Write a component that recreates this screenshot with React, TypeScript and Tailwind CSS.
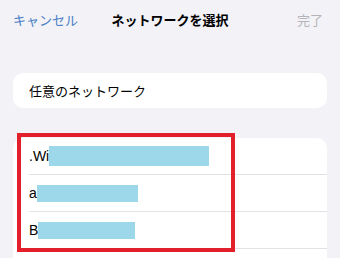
import React from 'react';

const rows = [
  { prefix: '.Wi', w: 160, h: 20 },
  { prefix: 'a', w: 101, h: 17 },
  { prefix: 'B', w: 97, h: 17 },
  { prefix: '', w: 0, h: 0 },
];

export default function App() {
  return (
    <div
      className="relative w-[340px] h-[258px] overflow-hidden bg-[#f2f2f7]"
      style={{ fontFamily: '"Noto Sans CJK JP", "Noto Sans", sans-serif' }}
    >
      <div className="grid grid-cols-[1fr_auto_1fr] items-center h-10 px-[13px] text-[13px]">
        <span className="text-[#4a7ec6]">キャンセル</span>
        <span className="font-bold text-black">ネットワークを選択</span>
        <span className="justify-self-end text-[#b4b4b9] pr-[4px]">完了</span>
      </div>

      <div className="mx-[13px] mt-[33px] h-[35px] rounded-[10px] bg-white px-4 flex items-center text-[13px] text-black">
        任意のネットワーク
      </div>

      <div className="mx-[13px] mt-[30px] rounded-t-[10px] bg-white">
        {rows.map((r, i) => (
          <div key={i} className="pl-4">
            <div
              className={`h-[37px] flex items-center text-[14px] text-black ${
                i < rows.length - 1 ? 'border-b border-[#e2e2e6]' : ''
              }`}
              style={{ fontFamily: '"Liberation Sans", Arial, sans-serif' }}
            >
              <span>{r.prefix}</span>
              {r.w > 0 && (
                <span
                  className="inline-block bg-[#9dd8ea]"
                  style={{ width: r.w, height: r.h }}
                />
              )}
            </div>
          </div>
        ))}
      </div>

      <div className="absolute left-[17px] top-[133px] w-[218px] h-[119px] border-[4px] border-[#e21f2a] pointer-events-none" />
    </div>
  );
}
